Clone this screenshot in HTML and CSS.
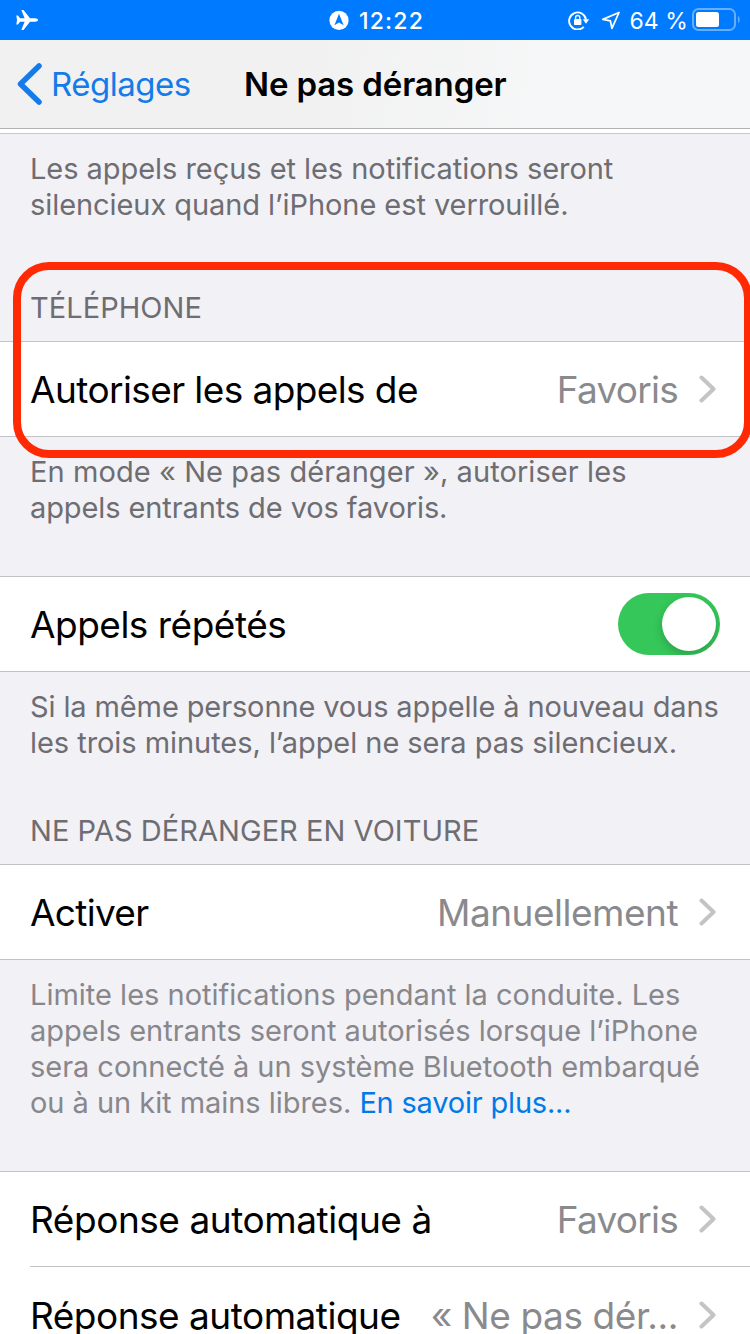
FILE: index.html
```html
<!DOCTYPE html>
<html lang="fr">
<head>
<meta charset="utf-8">
<title>Ne pas déranger</title>
<link rel="stylesheet" href="styles.css">
</head>
<body>
<div class="screen">
  <div class="status">
    <svg class="plane" width="24" height="22" viewBox="0 0 24 22"><path fill="#fff" d="M22 11c0-1-1.200-1.700-3-1.700h-5L7.500 1H5.300l3.300 8.300H4L2 6.500H.3L1 11l-.7 4.500H2l2-2.800h4.600L5.300 21h2.200L14 12.700h5c1.800 0 3-.7 3-1.700z"/></svg>
    <div class="clock">
      <svg width="20" height="20" viewBox="0 0 20 20"><circle cx="10" cy="10.400" r="9.600" fill="#fff"/><path fill="#007aff" d="M10 3.800 14.600 15.300 10 12.500 5.400 15.300z"/></svg>
      <span class="time">12:22</span>
    </div>
    <div class="indicators">
      <svg width="22" height="20" viewBox="0 0 22 20"><path d="M15.800 16.800A8.500 8.500 0 1 1 18 9.500" fill="none" stroke="#fff" stroke-width="1.900"/><path fill="#fff" d="M14.800 9.300h6.400L18 13.700z"/><rect x="6" y="9" width="7.400" height="6" rx=".8" fill="#fff"/><path d="M7.600 9.200V7.600a2.100 2.100 0 0 1 4.200 0V9.200" fill="none" stroke="#fff" stroke-width="1.300"/></svg>
      <svg class="arrow" width="20" height="20" viewBox="0 0 20 20"><path d="M18 2.500 1.800 9.300l7.600 1.500 1.500 7.600z" fill="none" stroke="#fff" stroke-width="1.800" stroke-linejoin="round"/></svg>
      <span class="percent">64 %</span>
      <svg class="battery" width="49" height="24" viewBox="0 0 49 24"><rect x="1" y="1" width="42" height="21" rx="5.500" fill="none" stroke="#66afff" stroke-width="2"/><rect x="4" y="4" width="23" height="15" rx="2.500" fill="#fff"/><path d="M46 8c2.200 1 2.200 6 0 7z" fill="#66afff"/></svg>
    </div>
  </div>

  <div class="nav">
    <svg class="back" width="26" height="42" viewBox="0 0 26 42"><path d="M22 3 3.500 21 22 39" fill="none" stroke="#137bea" stroke-width="5.500" stroke-linecap="round" stroke-linejoin="round"/></svg>
    <span class="back-label">Réglages</span>
    <span class="title">Ne pas déranger</span>
  </div>
  <div class="sliver"></div>

  <div class="caption">
    <span class="line c1">Les appels reçus et les notifications seront</span>
    <span class="line c2">silencieux quand l’iPhone est verrouillé.</span>
  </div>

  <div class="phone">
    <div class="heading phone-heading">TÉLÉPHONE</div>
    <div class="group">
      <div class="row"><span class="label l1">Autoriser les appels de</span><span class="value v1">Favoris</span><svg class="chev" width="18" height="28" viewBox="0 0 18 28"><path d="M2.500 2.500 14.500 14l-12 11.500" /></svg></div>
    </div>
    <div class="highlight"></div>
  </div>
  <div class="caption spaced">
    <span class="line c3">En mode « Ne pas déranger », autoriser les</span>
    <span class="line c4">appels entrants de vos favoris.</span>
  </div>

  <div class="group">
    <div class="row"><span class="label l2">Appels répétés</span><span class="switch"><span class="knob"></span></span></div>
  </div>
  <div class="caption">
    <span class="line c5">Si la même personne vous appelle à nouveau dans</span>
    <span class="line c6">les trois minutes, l’appel ne sera pas silencieux.</span>
  </div>

  <div class="heading car-heading">NE PAS DÉRANGER EN VOITURE</div>
  <div class="group">
    <div class="row"><span class="label l3">Activer</span><span class="value v2">Manuellement</span><svg class="chev" width="18" height="28" viewBox="0 0 18 28"><path d="M2.500 2.500 14.500 14l-12 11.500" /></svg></div>
  </div>
  <div class="caption light spaced">
    <span class="line c7">Limite les notifications pendant la conduite. Les</span>
    <span class="line c8">appels entrants seront autorisés lorsque l’iPhone</span>
    <span class="line c9">sera connecté à un système Bluetooth embarqué</span>
    <span class="line c10">ou à un kit mains libres. <a class="link">En savoir plus...</a></span>
  </div>

  <div class="group">
    <div class="row"><span class="label l4">Réponse automatique à</span><span class="value v1">Favoris</span><svg class="chev" width="18" height="28" viewBox="0 0 18 28"><path d="M2.500 2.500 14.500 14l-12 11.500" /></svg></div>
    <div class="row inset"><span class="label l5">Réponse automatique</span><span class="value v3">« Ne pas dér...</span><svg class="chev" width="18" height="28" viewBox="0 0 18 28"><path d="M2.500 2.500 14.500 14l-12 11.500" /></svg></div>
  </div>
</div>
</body>
</html>
```
FILE: styles.css
```css
* { box-sizing: border-box; }
body { margin: 0; font-family: Inter, "Liberation Sans", sans-serif; }
svg { display: block; flex: none; }
.screen { width: 750px; height: 1334px; overflow: hidden; background: #f2f1f6; }

.status { height: 40px; background: #007aff; color: #fff; display: grid; grid-template-columns: 1fr auto 1fr; align-items: center; font-size: 23px; }
.plane { margin-left: 16px; }
.clock { display: flex; align-items: center; gap: 10px; padding-left: 3px; }
.time { font-weight: 500; letter-spacing: 1.2px; padding-top: 1px; }
.indicators { display: flex; align-items: center; justify-content: flex-end; padding-right: 10px; }
.arrow { margin-left: 11px; }
.percent { margin-left: 8px; padding-top: 1px; letter-spacing: .1px; }
.battery { margin-left: 4px; margin-right: -1px; }

.nav { height: 89px; border-bottom: 1px solid #b2b2b4; background: linear-gradient(100deg, #f1f1f1 40%, #f6f7f8 75%); display: flex; align-items: center; padding-left: 17px; white-space: nowrap; }
.back-label { margin-left: 8px; width: 193px; font-size: 33px; letter-spacing: -.5px; color: #137bea; }
.title { font-size: 33px; font-weight: 600; letter-spacing: -.13px; color: #000; }
.sliver { height: 5px; background: #fff; border-bottom: 1px solid #c8c7cc; }

.caption { padding: 17px 0 0 30px; font-size: 29px; line-height: 36px; color: #6d6d72; }
.caption.light { color: #87878c; }
.caption.spaced { padding-bottom: 50px; }
.line { display: block; white-space: nowrap; }
.link { color: #007ae8; letter-spacing: -.2px; }
.c1 { letter-spacing: -.05px; }
.c2 { letter-spacing: -.07px; }
.c3 { letter-spacing: .08px; }
.c4 { letter-spacing: -.1px; }
.c5 { letter-spacing: -.12px; }
.c6 { letter-spacing: -.05px; }
.c9, .c10 { letter-spacing: -.04px; }

.heading { padding: 0 0 15px 30px; font-size: 29px; line-height: 36px; letter-spacing: .04px; color: #6d6d72; }
.car-heading { margin-top: 52px; }
.phone { position: relative; margin-top: 67px; }
.highlight { position: absolute; left: 13px; top: -28px; width: 739px; height: 196px; border: 8px solid #ff2a04; border-radius: 36px; }

.group { background: #fff; border-top: 1px solid #c3c2c7; border-bottom: 1px solid #c3c2c7; }
.row { height: 94px; display: flex; align-items: center; padding: 0 33px 0 30px; white-space: nowrap; }
.row.inset { margin-left: 30px; padding-left: 0; border-top: 1px solid #c3c2c7; height: 97px; }
.label { flex: 1; font-size: 37px; letter-spacing: -.5px; color: #000; }
.l1 { letter-spacing: -.59px; }
.l3 { letter-spacing: -.7px; }
.l4 { letter-spacing: -.45px; }
.value { font-size: 37px; color: #8a8a8e; }
.v1 { letter-spacing: -.75px; }
.v2 { letter-spacing: -.5px; }
.v3 { letter-spacing: -.4px; }
.chev { margin-left: 21px; }
.chev path { fill: none; stroke: #c4c4c6; stroke-width: 4; stroke-linecap: round; stroke-linejoin: round; }
.switch { width: 102px; height: 62px; border-radius: 31px; background: #35c759; display: flex; justify-content: flex-end; align-items: center; padding-right: 4px; margin-right: -3px; overflow: hidden; }
.knob { width: 54px; height: 54px; border-radius: 50%; background: #fff; box-shadow: 0 4px 10px rgba(0, 0, 0, .2); }
```
